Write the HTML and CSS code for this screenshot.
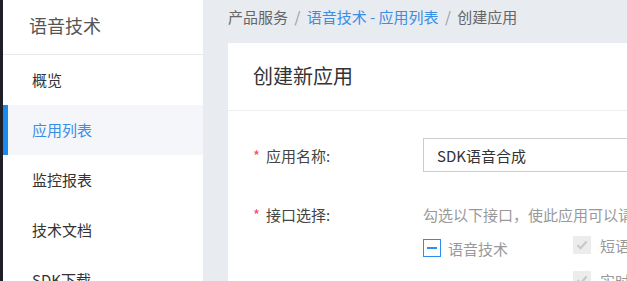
FILE: index.html
```html
<!DOCTYPE html>
<html lang="zh-CN">
<head>
    <meta charset="UTF-8">
    <meta name="viewport" content="width=device-width, initial-scale=1.0">
    <title>创建应用</title>
    <link rel="stylesheet" href="styles.css">
</head>
<body>
    <div class="rail"></div>

    <div class="sidebar">
        <div class="sidebar-head">语音技术</div>
        <ul class="nav">
            <li>概览</li>
            <li class="active">应用列表</li>
            <li>监控报表</li>
            <li>技术文档</li>
            <li>SDK下载</li>
        </ul>
    </div>

    <div class="main">
        <div class="crumbs">
            <span>产品服务</span>
            <span class="sep">/</span>
            <a href="#">语音技术 - 应用列表</a>
            <span class="sep">/</span>
            <span>创建应用</span>
        </div>

        <div class="card">
            <div class="card-head">创建新应用</div>
            <div class="card-body">
                <div class="row">
                    <label class="field-label"><span class="star">*</span>应用名称:</label>
                    <input type="text" class="text-input" value="SDK语音合成">
                </div>

                <div class="row row-api">
                    <label class="field-label"><span class="star">*</span>接口选择:</label>
                    <div class="field">
                        <div class="hint">勾选以下接口，使此应用可以请求已勾选的接口服务</div>
                        <div class="options">
                            <div class="opt opt-parent">
                                <span class="box box-half"><span class="dash"></span></span>
                                <span>语音技术</span>
                            </div>
                            <div class="children">
                                <div class="opt opt-child">
                                    <span class="box box-off">
                                        <svg width="14" height="14" viewBox="0 0 14 14"><path d="M2.5 7.2 L5.6 10.2 L11.6 3.6" fill="none" stroke="#c8c8c8" stroke-width="2.2"/></svg>
                                    </span>
                                    <span>短语音识别</span>
                                </div>
                                <div class="opt opt-child">
                                    <span class="box box-off">
                                        <svg width="14" height="14" viewBox="0 0 14 14"><path d="M2.5 7.2 L5.6 10.2 L11.6 3.6" fill="none" stroke="#c8c8c8" stroke-width="2.2"/></svg>
                                    </span>
                                    <span>实时语音识别</span>
                                </div>
                            </div>
                        </div>
                    </div>
                </div>
            </div>
        </div>
    </div>
</body>
</html>
```

FILE: styles.css
```css
html, body {
    height: 100%;
}

body {
    margin: 0;
    display: flex;
    overflow: hidden;
    font-family: "Noto Sans CJK SC", "Liberation Sans", sans-serif;
    font-size: 15px;
    color: #333;
    background-color: #e8ebef;
}

.rail {
    width: 3px;
    flex: none;
    background-color: #1e1f27;
}

.sidebar {
    width: 200px;
    flex: none;
    background-color: #fff;
}

.sidebar-head {
    height: 55px;
    line-height: 50px;
    padding-left: 26px;
    font-size: 18px;
    color: #555;
    border-bottom: 1px solid #e8e8e8;
    box-sizing: border-box;
}

.nav {
    list-style: none;
    margin: 0;
    padding: 0;
}

.nav li {
    height: 50px;
    line-height: 50px;
    padding-left: 29px;
    color: #333;
    white-space: nowrap;
}

.nav li.active {
    padding-left: 24px;
    border-left: 5px solid #1a8aef;
    background-color: #f4f6fa;
    color: #3a8ee6;
}

.main {
    flex: 1;
    min-width: 0;
    padding-left: 25px;
    display: flex;
    flex-direction: column;
    overflow: hidden;
}

.crumbs {
    height: 43px;
    line-height: 34px;
    flex: none;
    color: #666;
    white-space: nowrap;
}

.crumbs a {
    color: #3a8ee6;
    text-decoration: none;
}

.crumbs .sep {
    color: #999;
    margin: 0 3px;
}

.card {
    flex: 1;
    background-color: #fff;
}

.card-head {
    height: 68px;
    line-height: 66px;
    padding-left: 25px;
    font-size: 20px;
    color: #333;
    border-bottom: 1px solid #eceef1;
    box-sizing: border-box;
}

.card-body {
    padding: 27px 0 0 25px;
}

.row {
    display: flex;
    align-items: center;
}

.field-label {
    width: 170px;
    flex: none;
    color: #444;
    white-space: nowrap;
}

.star {
    color: #f0506e;
    margin-right: 6px;
}

.text-input {
    flex: 1;
    height: 34px;
    padding: 0 0 0 13px;
    border: 1px solid #ccc;
    border-right: none;
    box-sizing: border-box;
    font-family: inherit;
    font-size: 15px;
    color: #333;
    outline: none;
}

.row-api {
    margin-top: 33px;
    align-items: flex-start;
}

.row-api .field-label {
    line-height: 20px;
}

.field {
    flex: 1;
    min-width: 0;
}

.hint {
    line-height: 20px;
    color: #999;
    white-space: nowrap;
}

.options {
    display: flex;
    margin-top: 11px;
}

.opt {
    display: flex;
    align-items: center;
    height: 18px;
    color: #999;
    white-space: nowrap;
}

.opt-parent {
    width: 150px;
    flex: none;
    gap: 7px;
    margin-top: 3px;
}

.children {
    display: flex;
    flex-direction: column;
    gap: 17px;
}

.opt-child {
    gap: 9px;
}

.box {
    width: 18px;
    height: 18px;
    flex: none;
    box-sizing: border-box;
    display: flex;
    align-items: center;
    justify-content: center;
}

.box-half {
    border: 1px solid #2d8cf0;
    background-color: #fff;
}

.dash {
    width: 10px;
    height: 2px;
    background-color: #2d8cf0;
}

.box-off {
    background-color: #ececec;
}
```
